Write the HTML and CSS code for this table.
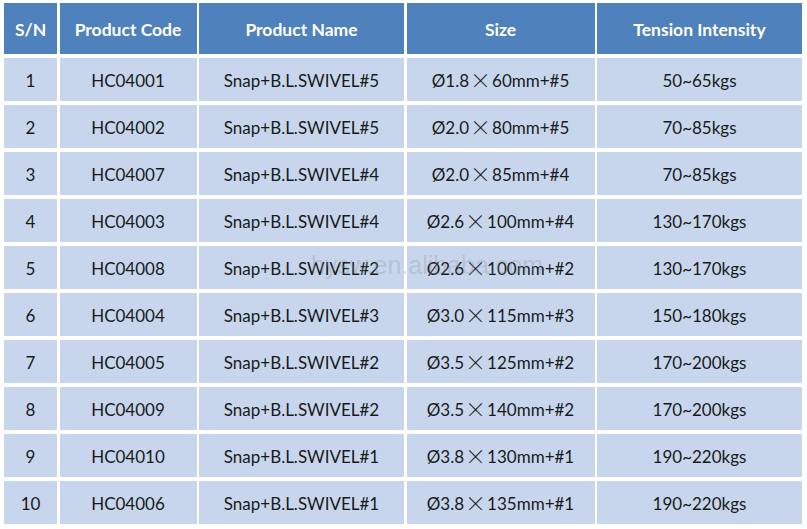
FILE: index.html
```html
<!DOCTYPE html>
<html>
<head>
<meta charset="utf-8">
<link rel="stylesheet" href="styles.css">
</head>
<body>
<div class="page">
  <div class="table">
    <div class="cell head">S/N</div>
    <div class="cell head">Product Code</div>
    <div class="cell head">Product Name</div>
    <div class="cell head">Size</div>
    <div class="cell head">Tension Intensity</div>

    <div class="cell">1</div><div class="cell">HC04001</div><div class="cell">Snap+B.L.SWIVEL#5</div><div class="cell">Ø1.8<span class="x">×</span>60mm+#5</div><div class="cell">50~65kgs</div>
    <div class="cell">2</div><div class="cell">HC04002</div><div class="cell">Snap+B.L.SWIVEL#5</div><div class="cell">Ø2.0<span class="x">×</span>80mm+#5</div><div class="cell">70~85kgs</div>
    <div class="cell">3</div><div class="cell">HC04007</div><div class="cell">Snap+B.L.SWIVEL#4</div><div class="cell">Ø2.0<span class="x">×</span>85mm+#4</div><div class="cell">70~85kgs</div>
    <div class="cell">4</div><div class="cell">HC04003</div><div class="cell">Snap+B.L.SWIVEL#4</div><div class="cell">Ø2.6<span class="x">×</span>100mm+#4</div><div class="cell">130~170kgs</div>
    <div class="cell">5</div><div class="cell">HC04008</div><div class="cell">Snap+B.L.SWIVEL#2</div><div class="cell">Ø2.6<span class="x">×</span>100mm+#2</div><div class="cell">130~170kgs</div>
    <div class="cell">6</div><div class="cell">HC04004</div><div class="cell">Snap+B.L.SWIVEL#3</div><div class="cell">Ø3.0<span class="x">×</span>115mm+#3</div><div class="cell">150~180kgs</div>
    <div class="cell">7</div><div class="cell">HC04005</div><div class="cell">Snap+B.L.SWIVEL#2</div><div class="cell">Ø3.5<span class="x">×</span>125mm+#2</div><div class="cell">170~200kgs</div>
    <div class="cell">8</div><div class="cell">HC04009</div><div class="cell">Snap+B.L.SWIVEL#2</div><div class="cell">Ø3.5<span class="x">×</span>140mm+#2</div><div class="cell">170~200kgs</div>
    <div class="cell">9</div><div class="cell">HC04010</div><div class="cell">Snap+B.L.SWIVEL#1</div><div class="cell">Ø3.8<span class="x">×</span>130mm+#1</div><div class="cell">190~220kgs</div>
    <div class="cell">10</div><div class="cell">HC04006</div><div class="cell">Snap+B.L.SWIVEL#1</div><div class="cell">Ø3.8<span class="x">×</span>135mm+#1</div><div class="cell">190~220kgs</div>
  </div>
  <div class="watermark">hysw.en.alibaba.com</div>
</div>
</body>
</html>
```

FILE: styles.css
```css
html, body {
  margin: 0;
  padding: 0;
  background: #ffffff;
}

.page {
  position: relative;
  width: 807px;
  height: 529px;
  padding: 3px 0 0 4px;
  box-sizing: border-box;
  font-family: Lato, "Open Sans", "Liberation Sans", sans-serif;
}

.table {
  display: grid;
  grid-template-columns: 53px 137px 205px 188px 205px;
  grid-template-rows: 50.5px repeat(10, 42.5px);
  column-gap: 2.5px;
  row-gap: 4.5px;
}

.cell {
  background: #c7d6ec;
  color: #1a1a1a;
  font-size: 17px;
  display: flex;
  align-items: center;
  justify-content: center;
  white-space: nowrap;
  padding-top: 3px;
  box-sizing: border-box;
}

.cell.head {
  background: #4f81bd;
  color: #ffffff;
  font-weight: 700;
  font-size: 17.5px;
  padding-top: 3px;
}

.x {
  font-family: "Noto Sans CJK SC", sans-serif;
  font-size: 21px;
  font-weight: 300;
  line-height: 1;
  margin: 0 1px;
  position: relative;
  top: -1px;
}

.watermark {
  position: absolute;
  left: 311px;
  top: 251px;
  font-family: "Liberation Sans", sans-serif;
  font-size: 25px;
  color: rgba(140, 145, 160, 0.3);
  pointer-events: none;
}
```
